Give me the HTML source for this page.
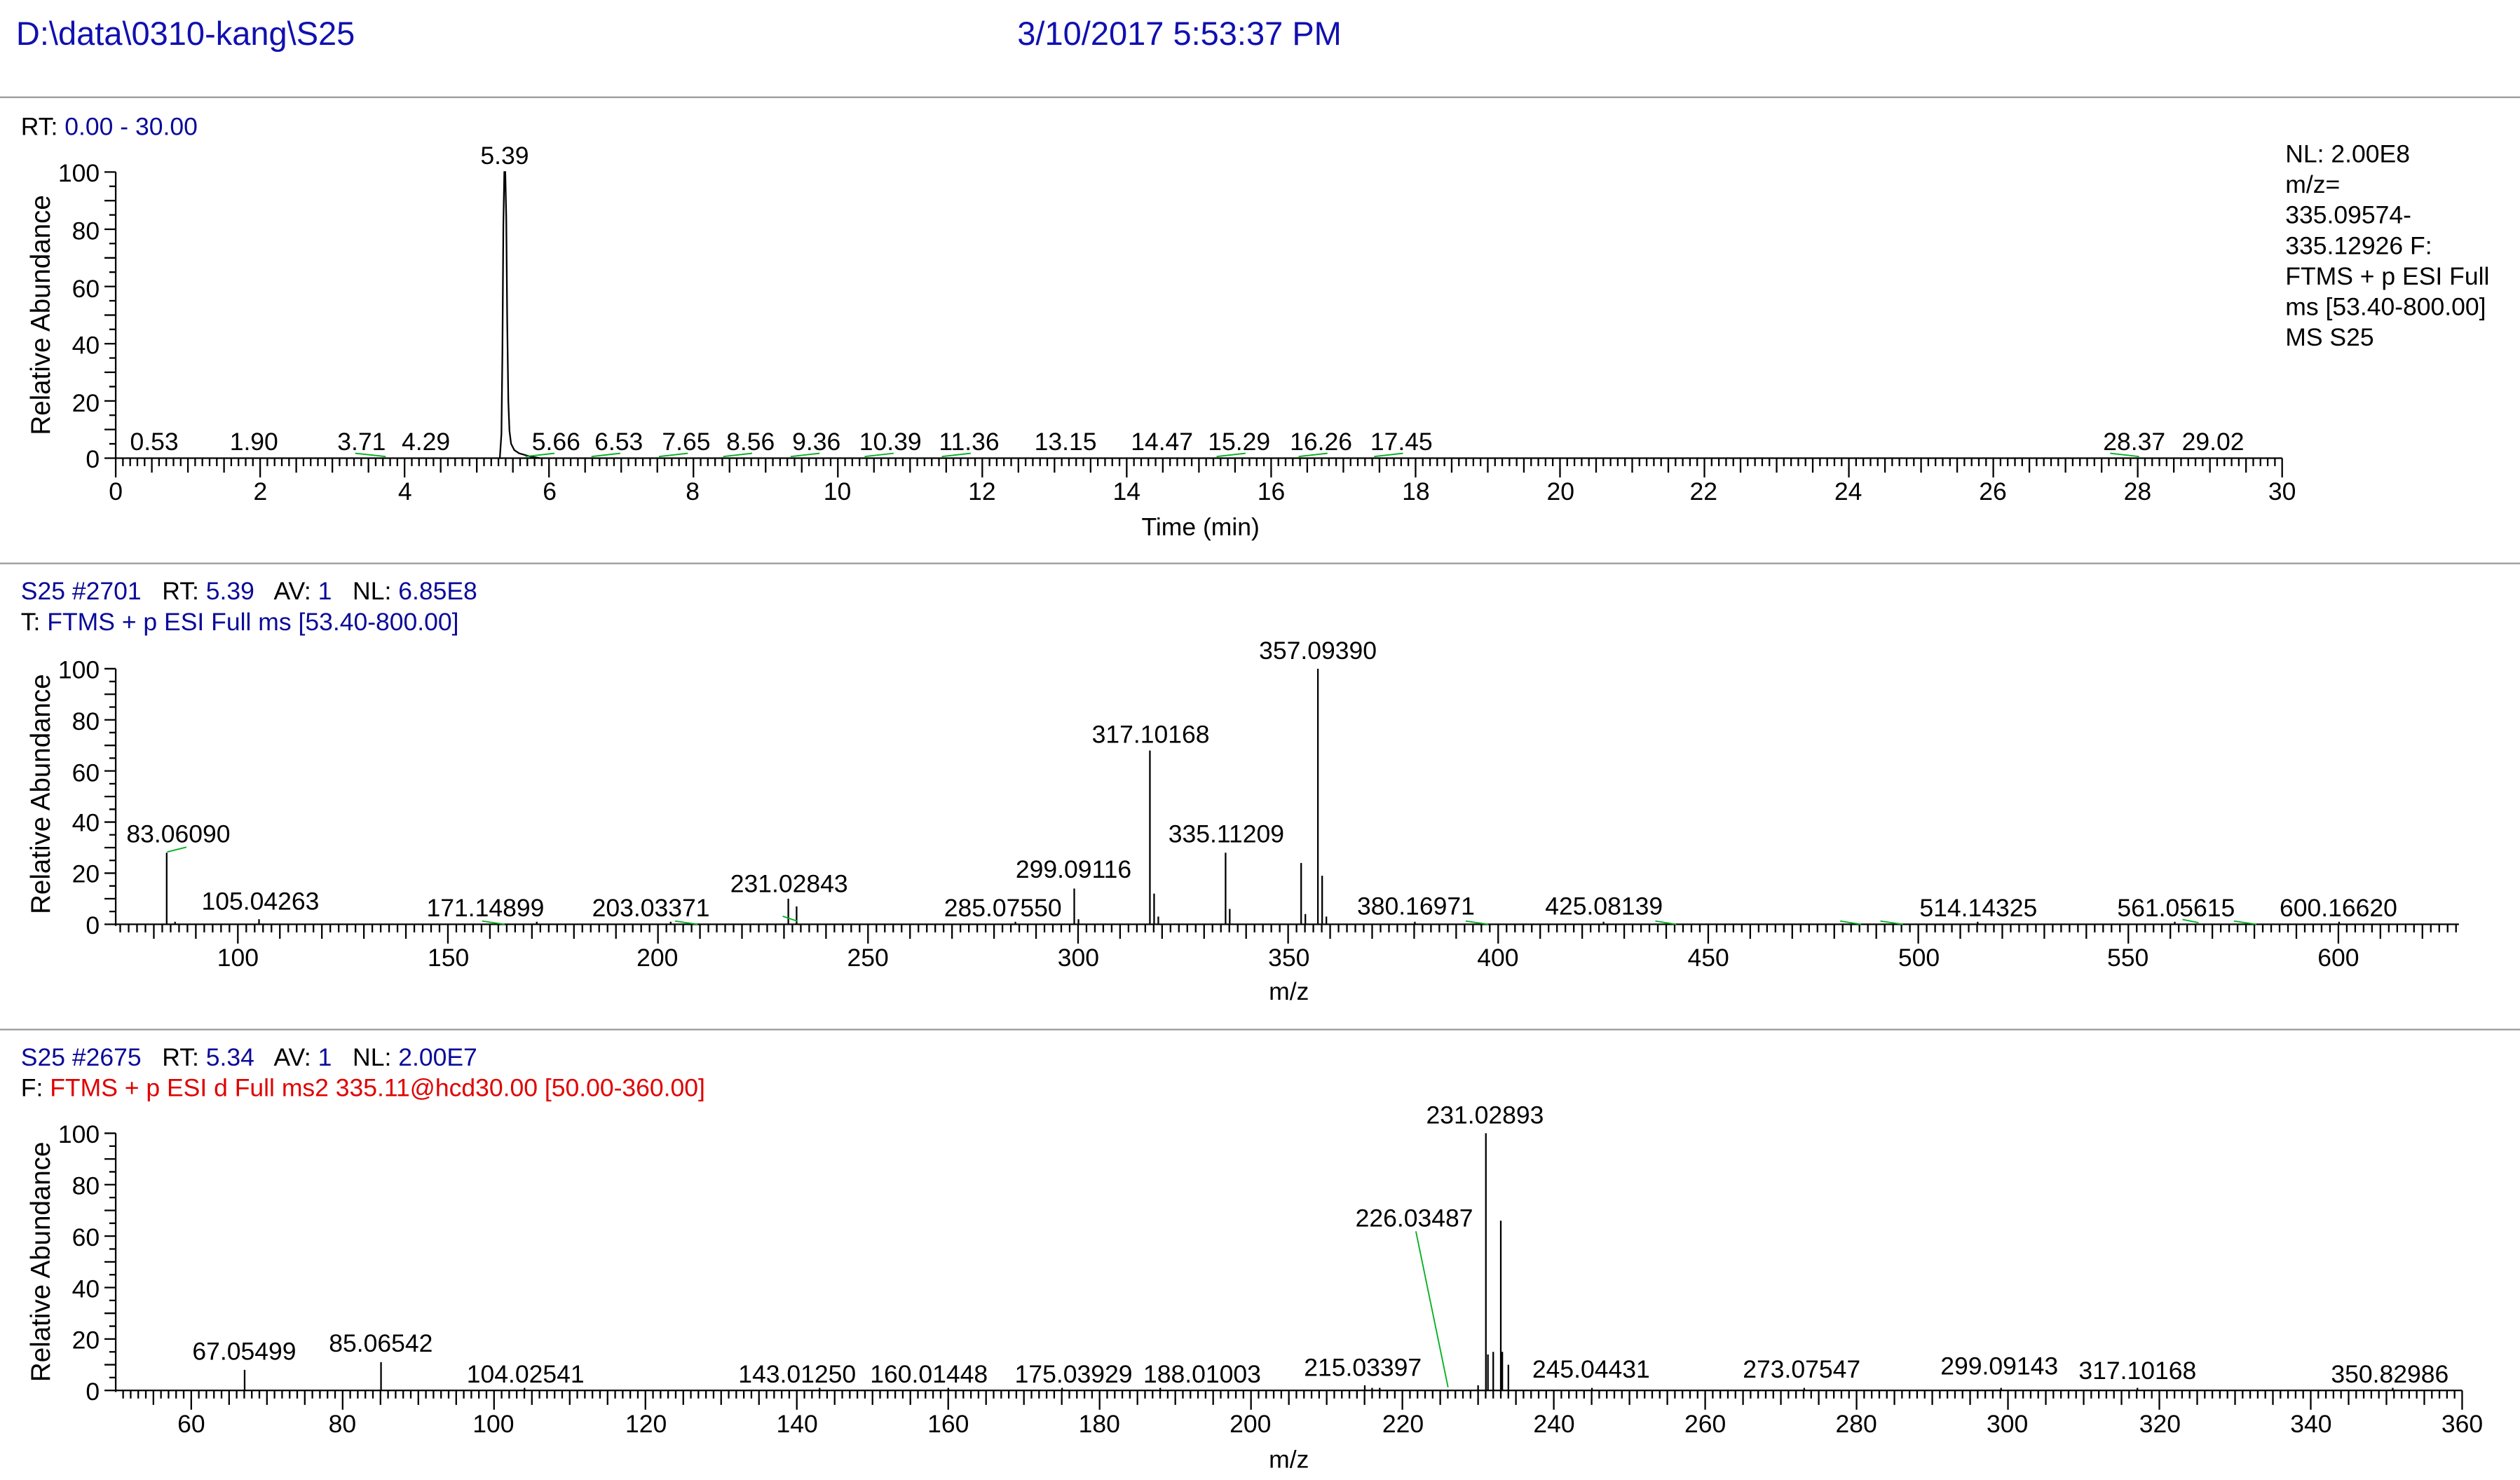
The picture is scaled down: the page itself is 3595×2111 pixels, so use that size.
<!DOCTYPE html>
<html><head><meta charset="utf-8"><style>
html,body{margin:0;padding:0;background:#fff;}
svg{display:block}
text{font-family:"Liberation Sans Narrow","Liberation Sans",sans-serif;fill:#000;font-size:15.5px}
.r{font-family:"Liberation Sans",sans-serif}
.b{fill:#0a0a99}
.red{fill:#e00000}
.m{text-anchor:middle}
.e{text-anchor:end}
</style></head><body>
<svg id="s" width="3595" height="2111" viewBox="0 0 1568 920.7" xmlns="http://www.w3.org/2000/svg">
<rect width="1568" height="921" fill="#fff"/>
<text x="10" y="28" class="b r" style="font-size:20.5px;fill:#1010b0">D:\data\0310-kang\S25</text>
<text x="633" y="28" class="b r" style="font-size:20.5px;fill:#1010b0">3/10/2017 5:53:37 PM</text>
<line x1="0" y1="60.5" x2="1568" y2="60.5" stroke="#999" stroke-width="1"/>
<line x1="0" y1="350.5" x2="1568" y2="350.5" stroke="#999" stroke-width="1"/>
<line x1="0" y1="640.5" x2="1568" y2="640.5" stroke="#999" stroke-width="1"/>

<!-- Panel 1 -->
<text x="13" y="84">RT: <tspan class="b">0.00 - 30.00</tspan></text>
<text class="r m" transform="translate(31,196) rotate(-90)" style="font-size:16.8px">Relative Abundance</text>
<text x="62" y="113" class="e">100</text><text x="62" y="149" class="e">80</text><text x="62" y="185" class="e">60</text><text x="62" y="220" class="e">40</text><text x="62" y="256" class="e">20</text><text x="62" y="291" class="e">0</text>
<text x="72" y="311" class="m">0</text><text x="162" y="311" class="m">2</text><text x="252" y="311" class="m">4</text><text x="342" y="311" class="m">6</text><text x="431" y="311" class="m">8</text><text x="521" y="311" class="m">10</text><text x="611" y="311" class="m">12</text><text x="701" y="311" class="m">14</text><text x="791" y="311" class="m">16</text><text x="881" y="311" class="m">18</text><text x="971" y="311" class="m">20</text><text x="1060" y="311" class="m">22</text><text x="1150" y="311" class="m">24</text><text x="1240" y="311" class="m">26</text><text x="1330" y="311" class="m">28</text><text x="1420" y="311" class="m">30</text>
<text x="747" y="333" class="m">Time (min)</text>
<text x="314" y="102" class="m">5.39</text>
<text x="96" y="280" class="m">0.53</text><text x="158" y="280" class="m">1.90</text><text x="225" y="280" class="m">3.71</text><text x="265" y="280" class="m">4.29</text><text x="346" y="280" class="m">5.66</text><text x="385" y="280" class="m">6.53</text><text x="427" y="280" class="m">7.65</text><text x="467" y="280" class="m">8.56</text><text x="508" y="280" class="m">9.36</text><text x="554" y="280" class="m">10.39</text><text x="603" y="280" class="m">11.36</text><text x="663" y="280" class="m">13.15</text><text x="723" y="280" class="m">14.47</text><text x="771" y="280" class="m">15.29</text><text x="822" y="280" class="m">16.26</text><text x="872" y="280" class="m">17.45</text><text x="1328" y="280" class="m">28.37</text><text x="1377" y="280" class="m">29.02</text>
<text x="1422" y="101" class="r" style="font-size:15.5px">NL: 2.00E8</text>
<text x="1422" y="120" class="r" style="font-size:15.5px">m/z=</text>
<text x="1422" y="139" class="r" style="font-size:15.5px">335.09574-</text>
<text x="1422" y="158" class="r" style="font-size:15.5px">335.12926 F:</text>
<text x="1422" y="177" class="r" style="font-size:15.5px">FTMS + p ESI Full</text>
<text x="1422" y="196" class="r" style="font-size:15.5px">ms [53.40-800.00]</text>
<text x="1422" y="215" class="r" style="font-size:15.5px">MS S25</text>
<path d="M311,285 L312,270 L312.6,220 L313.2,140 L313.8,107 L314.4,107 L315,135 L315.6,200 L316.3,250 L317,268 L318,276 L320,280 L323,282 L330,284 L336,285" fill="none" stroke="#000" stroke-width="1"/>

<!-- Panel 2 -->
<text x="13" y="373" class="b">S25 #2701 <tspan style="fill:#000">&#160; RT:</tspan> 5.39 <tspan style="fill:#000">&#160; AV:</tspan> 1 <tspan style="fill:#000">&#160; NL:</tspan> 6.85E8</text>
<text x="13" y="392">T: <tspan class="b">FTMS + p ESI Full ms [53.40-800.00]</tspan></text>
<text class="r m" transform="translate(31,494) rotate(-90)" style="font-size:16.8px">Relative Abundance</text>
<text x="62" y="422" class="e">100</text><text x="62" y="486" class="e">60</text><text x="62" y="454" class="e">80</text><text x="62" y="517" class="e">40</text><text x="62" y="549" class="e">20</text><text x="62" y="581" class="e">0</text>
<text x="148" y="601" class="m">100</text><text x="279" y="601" class="m">150</text><text x="409" y="601" class="m">200</text><text x="540" y="601" class="m">250</text><text x="671" y="601" class="m">300</text><text x="802" y="601" class="m">350</text><text x="932" y="601" class="m">400</text><text x="1063" y="601" class="m">450</text><text x="1194" y="601" class="m">500</text><text x="1324" y="601" class="m">550</text><text x="1455" y="601" class="m">600</text>
<text x="802" y="622" class="m">m/z</text>
<text x="111" y="524" class="m">83.06090</text><text x="162" y="566" class="m">105.04263</text><text x="302" y="570" class="m">171.14899</text><text x="405" y="570" class="m">203.03371</text><text x="491" y="555" class="m">231.02843</text><text x="624" y="570" class="m">285.07550</text><text x="668" y="546" class="m">299.09116</text><text x="716" y="462" class="m">317.10168</text><text x="763" y="524" class="m">335.11209</text><text x="820" y="410" class="m">357.09390</text><text x="881" y="569" class="m">380.16971</text><text x="998" y="569" class="m">425.08139</text><text x="1231" y="570" class="m">514.14325</text><text x="1354" y="570" class="m">561.05615</text><text x="1455" y="570" class="m">600.16620</text>

<!-- Panel 3 -->
<text x="13" y="663" class="b">S25 #2675 <tspan style="fill:#000">&#160; RT:</tspan> 5.34 <tspan style="fill:#000">&#160; AV:</tspan> 1 <tspan style="fill:#000">&#160; NL:</tspan> 2.00E7</text>
<text x="13" y="682">F: <tspan class="red">FTMS + p ESI d Full ms2 335.11@hcd30.00 [50.00-360.00]</tspan></text>
<text class="r m" transform="translate(31,785) rotate(-90)" style="font-size:16.8px">Relative Abundance</text>
<text x="62" y="711" class="e">100</text><text x="62" y="743" class="e">80</text><text x="62" y="775" class="e">60</text><text x="62" y="807" class="e">40</text><text x="62" y="839" class="e">20</text><text x="62" y="871" class="e">0</text>
<text x="119" y="891" class="m">60</text><text x="213" y="891" class="m">80</text><text x="307" y="891" class="m">100</text><text x="402" y="891" class="m">120</text><text x="496" y="891" class="m">140</text><text x="590" y="891" class="m">160</text><text x="684" y="891" class="m">180</text><text x="778" y="891" class="m">200</text><text x="873" y="891" class="m">220</text><text x="967" y="891" class="m">240</text><text x="1061" y="891" class="m">260</text><text x="1155" y="891" class="m">280</text><text x="1249" y="891" class="m">300</text><text x="1344" y="891" class="m">320</text><text x="1438" y="891" class="m">340</text><text x="1532" y="891" class="m">360</text>
<text x="802" y="913" class="m">m/z</text>
<text x="152" y="846" class="m">67.05499</text><text x="237" y="841" class="m">85.06542</text><text x="327" y="860" class="m">104.02541</text><text x="496" y="860" class="m">143.01250</text><text x="578" y="860" class="m">160.01448</text><text x="668" y="860" class="m">175.03929</text><text x="748" y="860" class="m">188.01003</text><text x="848" y="856" class="m">215.03397</text><text x="880" y="763" class="m">226.03487</text><text x="924" y="699" class="m">231.02893</text><text x="990" y="857" class="m">245.04431</text><text x="1121" y="857" class="m">273.07547</text><text x="1244" y="855" class="m">299.09143</text><text x="1330" y="858" class="m">317.10168</text><text x="1487" y="860" class="m">350.82986</text>
<line x1="881" y1="766" x2="901" y2="863" stroke="#00b020" stroke-width="0.8"/>
<g id="gen"></g>
</svg>
<script>
(function(){
var NS="http://www.w3.org/2000/svg",g=document.getElementById('gen'),d="";
function L(x1,y1,x2,y2){d+="M"+x1.toFixed(2)+","+y1.toFixed(2)+"L"+x2.toFixed(2)+","+y2.toFixed(2);}
function axes(x0,yTop,y0,xEnd,v0,vEnd,step,minor,mid){
 L(x0,yTop,x0,y0+1);L(x0,y0,xEnd,y0);
 var h=y0-yTop;
 for(var i=0;i<=20;i++){var y=y0-h*i/20;L(x0-(i%2==0?7:4),y,x0,y);}
 var px=(xEnd-x0)/(vEnd-v0);
 var s=Math.ceil(v0/minor)*minor;
 for(var v=s;v<=vEnd+1e-9;v+=minor){var x=x0+(v-v0)*px;
  var big=Math.abs(v/step-Math.round(v/step))<1e-6, md=Math.abs(v/mid-Math.round(v/mid))<1e-6;
  L(x,y0,x,y0+(big?12:md?9:5));}
 return function(v){return x0+(v-v0)*px;};
}
axes(72,107,285,1420,0,30,2,0.1,0.5);
var f2=axes(72,416,575,1530,100-(148-72)/2.614,100+(1530-148)/2.614,50,2,10);
var f3=axes(72,705,865,1532,60-(119-72)/4.71,360,20,1,5);
function pk(f,y0,h,m,p){L(f(m),y0,f(m),y0-h*p/100);}
[[83.06,28],[85.05,1],[105.04,2],[171.15,1],[203.03,1],[231.03,10],[233,7],[285.08,1],[299.09,14],[300.1,2],[317.1,68],[318.1,12],[319.1,3],[335.11,28],[336.1,6],[353.1,24],[354.1,4],[357.09,100],[358.1,19],[359.1,3],[380.17,1],[425.08,1],[514.14,1],[561.06,1],[600.17,1]].forEach(function(a){pk(f2,575,159,a[0],a[1]);});
[[67.05,8],[85.07,11],[104.03,1],[143.01,1],[160.01,1],[175.04,1],[188.01,1],[215.03,2],[216,1],[217,1],[230,2],[231.03,100],[231.3,14],[232,15],[233,66],[233.2,15],[234,10],[245.04,1],[273.08,1],[299.09,1],[317.1,1],[350.83,1]].forEach(function(a){pk(f3,865,160,a[0],a[1]);});
var p=document.createElementNS(NS,'path');p.setAttribute('d',d);p.setAttribute('stroke','#000');p.setAttribute('stroke-width','1');p.setAttribute('fill','none');g.appendChild(p);
var gd="";[[221,282,240,284],[327,284,345,282],[368,284,386,282],[410,284,428,282],[450,284,468,282],[492,284,510,282],[538,284,556,282],[586,284,604,282],[757,284,775,282],[808,284,826,282],[855,284,873,282],[1313,282,1331,284],[104,530,116,527],[300,573,314,575],[420,573,434,575],[487,570,496,573],[1358,572,1368,574],[912,573,926,575],[1145,573,1158,575],[1030,573,1043,575],[1390,573,1404,575],[1170,573,1184,575]].forEach(function(a){gd+="M"+a[0]+","+a[1]+"L"+a[2]+","+a[3];});
var q=document.createElementNS(NS,'path');q.setAttribute('d',gd);q.setAttribute('stroke','#00b020');q.setAttribute('stroke-width','0.8');q.setAttribute('fill','none');g.appendChild(q);
})();
</script>
</body></html>
